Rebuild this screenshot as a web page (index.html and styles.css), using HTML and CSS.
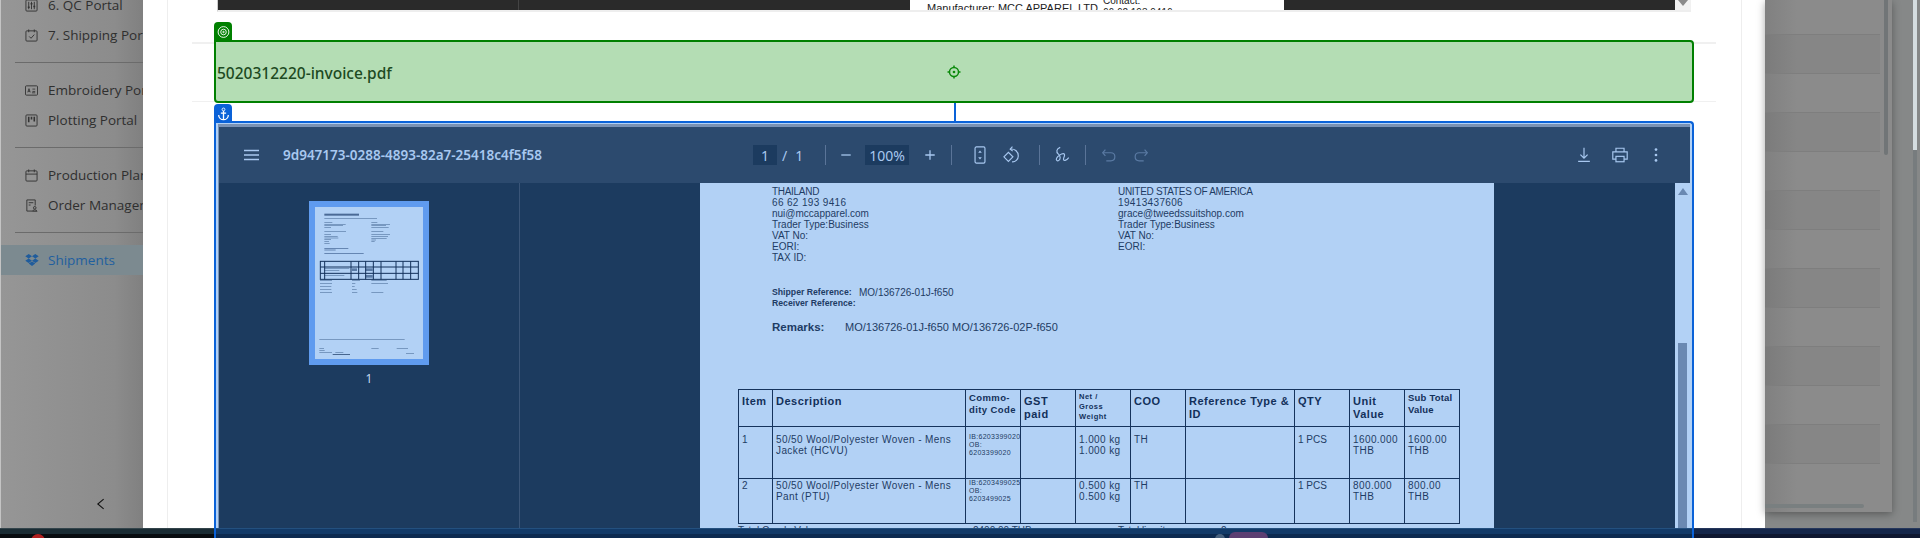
FILE: index.html
```html
<!DOCTYPE html>
<html lang="en">
<head>
    <meta charset="UTF-8">
    <title>Shipments</title>
    <link rel="stylesheet" href="styles.css">
</head>
<body>
<div class="screen">
    <!-- dimmed sidebar behind the modal -->
    <div class="sidebar">
        <div class="nav-item">
            <svg class="nav-icon" viewBox="0 0 14 14"><rect x="1" y="1" width="12" height="12" rx="1"/><path d="M4 3v8M7 3v8M10 3v8"/><path d="M3 9h2M6 5h2M9 8h2" stroke-width="1.6"/></svg>
            <span>6. QC Portal</span>
        </div>
        <div class="nav-item">
            <svg class="nav-icon" viewBox="0 0 14 14"><rect x="1" y="2" width="12" height="11" rx="1"/><path d="M4 0.5v3M10 0.5v3M4.5 8l2 2 3.5-4"/></svg>
            <span>7. Shipping Portal</span>
        </div>
        <hr class="nav-line">
        <div class="nav-item">
            <svg class="nav-icon" viewBox="0 0 14 14"><rect x="0.5" y="2" width="13" height="10" rx="1"/><path d="M3 9l1.3-4 1.3 4M3.5 8h1.7M8 5.5h3M8 8h3M7.5 9.5h3.5" stroke-width="0.9"/></svg>
            <span>Embroidery Portal</span>
        </div>
        <div class="nav-item">
            <svg class="nav-icon" viewBox="0 0 14 14"><rect x="1" y="1" width="12" height="12" rx="1"/><path d="M4 3v6M7 3v3M10 3v5" stroke-width="1.7"/></svg>
            <span>Plotting Portal</span>
        </div>
        <hr class="nav-line">
        <div class="nav-item">
            <svg class="nav-icon" viewBox="0 0 14 14"><rect x="1" y="2" width="12" height="11" rx="1"/><path d="M4 0.5v3M10 0.5v3M1 5.5h12"/></svg>
            <span>Production Planning</span>
        </div>
        <div class="nav-item">
            <svg class="nav-icon" viewBox="0 0 14 14"><path d="M8 13H2V1h9v6"/><path d="M4 4h5M4 6.5h2"/><circle cx="10.5" cy="9.5" r="1.4"/><path d="M8 13.2c.3-2 4.7-2 5 0z"/></svg>
            <span>Order Management</span>
        </div>
        <hr class="nav-line">
        <div class="nav-item nav-active">
            <svg class="nav-icon nav-icon-fill" viewBox="0 0 14 14"><path d="M3.7 1L0.3 3.3l3.4 2.2L7 3.3zM10.3 1L7 3.3l3.3 2.2 3.4-2.2zM0.3 7.7l3.4 2.2L7 7.7 3.7 5.5zM10.3 5.5L7 7.7l3.3 2.2 3.4-2.2zM3.7 10.6L7 12.9l3.3-2.3L7 8.4z"/></svg>
            <span>Shipments</span>
        </div>
        <svg class="nav-collapse" viewBox="0 0 10 14"><path d="M8.5 1.5L2 7l6.5 5.500"/></svg>
    </div>

    <div class="modal">
        <div class="modal-col">
            <!-- previous block, scrolled almost out of view -->
            <div class="pdf-strip">
                <div class="strip-dark">
                    <div class="strip-side"></div>
                    <div class="strip-doc">
                        <div class="strip-left">Manufacturer: MCC APPAREL LTD</div>
                        <div class="strip-right">Contact:<br>66 62 193 9416</div>
                    </div>
                </div>
                <div class="strip-scroll"><span class="arrow-down"></span></div>
            </div>

            <div class="field-row">
                <div class="green-block">
                    <div class="tab tab-green">
                        <svg viewBox="0 0 14 14" class="tab-icon"><circle cx="7" cy="7" r="5.800"/><circle cx="7" cy="7" r="3"/><circle cx="7" cy="7" r="0.800"/></svg>
                    </div>
                    <span class="file-name">5020312220-invoice.pdf</span>
                    <svg class="target" viewBox="0 0 14 14"><circle cx="7" cy="7" r="4.500"/><circle class="target-dot" cx="7" cy="7" r="1.300"/><path d="M7 0.500v2M7 11.500v2M0.500 7h2M11.500 7h2"/></svg>
                    <div class="connector"></div>
                </div>
            </div>

            <div class="blue-wrap">
                <div class="blue-block">
                    <div class="tab tab-blue">
                        <svg viewBox="0 0 14 16" class="tab-icon"><circle cx="7" cy="2.800" r="1.600"/><path d="M7 4.500V14.500M4 7h6M1.500 9c0 3.300 2.500 5.500 5.500 5.500s5.500-2.200 5.500-5.500" stroke-width="1.500"/></svg>
                    </div>
                    <div class="viewer">
                        <div class="toolbar">
                            <div class="tb-left">
                                <svg class="tb-icon tb-menu" viewBox="0 0 16 12"><path d="M0 1.500h15M0 6h15M0 10.500h15" stroke-width="1.300"/></svg>
                                <span class="doc-title">9d947173-0288-4893-82a7-25418c4f5f58</span>
                            </div>
                            <div class="tb-center">
                                <span class="tb-box tb-page">1</span>
                                <span class="tb-pages"><span>/</span><span>1</span></span>
                                <span class="tb-sep tb-sep-first"></span>
                                <svg class="tb-icon" viewBox="0 0 14 14"><path d="M1.500 7h11" stroke-width="1.500"/></svg>
                                <span class="tb-box tb-zoom">100%</span>
                                <svg class="tb-icon" viewBox="0 0 14 14"><path d="M1.500 7h11M7 1.500v11" stroke-width="1.500"/></svg>
                                <span class="tb-sep tb-sep-fit"></span>
                                <svg class="tb-icon tb-big" viewBox="0 0 18 20"><rect x="3.500" y="1" width="11" height="18" rx="1.500"/><path class="solid" d="M9 5l2 2.500H7zM9 15l2-2.500H7z"/></svg>
                                <svg class="tb-icon tb-big" viewBox="0 0 20 20"><path d="M1 12l5-5 5 5-5 5z"/><path d="M8 3.500c4.500-.8 9 2.500 9 7.500 0 4-3.500 7-7 6.500"/><path d="M10.500 0.800L8 3.500l2.800 2.200"/></svg>
                                <span class="tb-sep tb-sep-ink"></span>
                                <svg class="tb-icon tb-big" viewBox="0 0 20 20"><path d="M8 1.500C4 3 3 6.500 6 9c2.500 2 2.500 5.500.5 7-1.800 1.300-3.500-.5-2.500-2.500 1.200-2.300 5-5 7.500-5 2 0 1.500 2.500.5 4.500-.8 1.800-.3 3.500 1.500 3 1.500-.4 2.800-1.500 4-3"/></svg>
                                <span class="tb-sep tb-sep-tight"></span>
                                <svg class="tb-icon tb-big tb-dim" viewBox="0 0 20 20"><path d="M6 4L3 7.500 6 11"/><path d="M3.500 7.500H12c3 0 4.500 2 4.500 4.500S15 16.500 12 16.500H7"/></svg>
                                <svg class="tb-icon tb-big tb-dim" viewBox="0 0 20 20"><path d="M14 4l3 3.500-3 3.500"/><path d="M16.500 7.500H8c-3 0-4.500 2-4.500 4.500S5 16.500 8 16.500h5"/></svg>
                            </div>
                            <div class="tb-right">
                                <svg class="tb-icon tb-big" viewBox="0 0 20 20"><path d="M10 2v11M6 9.500l4 4 4-4M3.500 17h13"/></svg>
                                <svg class="tb-icon tb-big" viewBox="0 0 20 20"><path d="M5.500 6V2.500h9V6M5.500 14.500H2V6.500h16v8h-3.500"/><rect x="5.500" y="11.500" width="9" height="6"/></svg>
                                <svg class="tb-icon tb-big" viewBox="0 0 20 20"><circle class="solid" cx="10" cy="4" r="1.500"/><circle class="solid" cx="10" cy="10" r="1.500"/><circle class="solid" cx="10" cy="16" r="1.500"/></svg>
                            </div>
                        </div>
                        <div class="viewer-body">
                            <div class="thumbs">
                                <div class="thumb">
                                    <svg class="thumb-page" viewBox="75 51 324 456">
                                        <g fill="#5a7ba6">
                                            <rect x="103" y="71" width="104" height="6" fill="#4a6a96"/>
                                            <rect x="103" y="84" width="158" height="2"/>
                                            <rect x="103" y="96" width="24" height="2"/><rect x="244" y="96" width="18" height="2"/>
                                            <rect x="103" y="102" width="64" height="2"/><rect x="244" y="102" width="56" height="2"/>
                                            <rect x="103" y="106" width="56" height="2"/><rect x="244" y="106" width="44" height="2"/>
                                            <rect x="103" y="111" width="20" height="2"/><rect x="244" y="111" width="52" height="2"/>
                                            <rect x="103" y="124" width="65" height="2"/><rect x="244" y="124" width="36" height="2"/>
                                            <rect x="103" y="133" width="20" height="2"/><rect x="244" y="133" width="56" height="2"/>
                                            <rect x="103" y="138" width="40" height="2"/><rect x="244" y="139" width="50" height="2"/>
                                            <rect x="103" y="143" width="42" height="2"/><rect x="244" y="144" width="46" height="2"/>
                                            <rect x="103" y="148" width="20" height="2"/><rect x="244" y="149" width="14" height="2"/>
                                            <rect x="103" y="153" width="14" height="2"/><rect x="244" y="154" width="10" height="2"/>
                                            <rect x="103" y="159" width="16" height="2"/>
                                            <rect x="103" y="175" width="72" height="2" fill="#3f6090"/><rect x="103" y="179" width="34" height="2" fill="#3f6090"/>
                                            <rect x="103" y="189" width="118" height="2" fill="#3f6090"/>
                                            <rect x="103" y="235" width="75" height="2"/><rect x="103" y="240" width="45" height="2"/>
                                            <rect x="186" y="235" width="15" height="8"/><rect x="226" y="235" width="22" height="8"/>
                                            <rect x="103" y="255" width="60" height="2"/><rect x="226" y="255" width="22" height="8"/>
                                            <rect x="90" y="270" width="36" height="2"/><rect x="186" y="270" width="24" height="2"/><rect x="244" y="270" width="46" height="2"/>
                                            <rect x="90" y="280" width="36" height="2"/><rect x="186" y="280" width="10" height="2"/><rect x="244" y="280" width="50" height="2"/>
                                            <rect x="90" y="289" width="34" height="2"/><rect x="186" y="289" width="8" height="2"/>
                                            <rect x="90" y="298" width="34" height="2"/><rect x="186" y="298" width="14" height="2"/>
                                            <rect x="90" y="307" width="36" height="2"/><rect x="186" y="307" width="16" height="2"/><rect x="244" y="307" width="36" height="2"/>
                                            <rect x="88" y="447" width="256" height="2"/>
                                            <rect x="88" y="475" width="14" height="2"/><rect x="244" y="475" width="22" height="2"/><rect x="320" y="475" width="34" height="2"/>
                                            <rect x="88" y="481" width="16" height="2"/>
                                            <rect x="88" y="487" width="38" height="2"/><rect x="136" y="487" width="24" height="2"/><rect x="348" y="490" width="24" height="2"/>
                                        </g>
                                        <rect x="128" y="492" width="52" height="2" fill="#12305a"/>
                                        <g fill="none" stroke="#12305a" stroke-width="3">
                                            <rect x="91" y="214" width="294" height="54"/>
                                            <path d="M91 231H385M91 250H385M104 214V268M183 214V268M206 214V268M227 214V268M250 214V268M273 214V268M318 214V268M339 214V268M362 214V268"/>
                                        </g>
                                    </svg>
                                </div>
                                <div class="thumb-num">1</div>
                            </div>
                            <div class="main">
                                <div class="page">
                                    <div class="address">
                                        <div class="addr-col"><span class="caps">THAILAND</span><br><span class="num">66 62 193 9416</span><br>nui@mccapparel.com<br>Trader Type:Business<br>VAT No:<br>EORI:<br>TAX ID:</div>
                                        <div><span class="caps">UNITED STATES OF AMERICA</span><br><span class="num">19413437606</span><br>grace@tweedssuitshop.com<br>Trader Type:Business<br>VAT No:<br>EORI:</div>
                                    </div>
                                    <div class="refs">
                                        <div class="ref-line"><b>Shipper Reference:</b><span>MO/136726-01J-f650</span></div>
                                        <div class="ref-line"><b>Receiver Reference:</b></div>
                                    </div>
                                    <div class="remarks"><b>Remarks:</b><span>MO/136726-01J-f650 MO/136726-02P-f650</span></div>
                                    <table class="items">
                                        <colgroup>
                                            <col class="c-item"><col class="c-desc"><col class="c-n"><col class="c-n"><col class="c-n"><col class="c-n"><col class="c-ref"><col class="c-n"><col class="c-n"><col class="c-n">
                                        </colgroup>
                                        <tr class="head">
                                            <th>Item</th>
                                            <th>Description</th>
                                            <th class="th-small th-code">Commo-<br>dity Code</th>
                                            <th>GST<br>paid</th>
                                            <th class="th-tiny">Net /<br>Gross<br>Weight</th>
                                            <th>COO</th>
                                            <th>Reference Type &amp; ID</th>
                                            <th>QTY</th>
                                            <th>Unit<br>Value</th>
                                            <th class="th-small th-sub">Sub Total Value</th>
                                        </tr>
                                        <tr class="row-one">
                                            <td>1</td>
                                            <td>50/50 Wool/Polyester Woven - Mens Jacket (HCVU)</td>
                                            <td class="code">IB:6203399020<br>OB:<br>6203399020</td>
                                            <td></td>
                                            <td>1.000 kg<br>1.000 kg</td>
                                            <td>TH</td>
                                            <td></td>
                                            <td class="qty">1 PCS</td>
                                            <td>1600.000 THB</td>
                                            <td>1600.00 THB</td>
                                        </tr>
                                        <tr class="row-two">
                                            <td>2</td>
                                            <td>50/50 Wool/Polyester Woven - Mens Pant (PTU)</td>
                                            <td class="code">IB:6203499025<br>OB:<br>6203499025</td>
                                            <td></td>
                                            <td>0.500 kg<br>0.500 kg</td>
                                            <td>TH</td>
                                            <td></td>
                                            <td class="qty">1 PCS</td>
                                            <td>800.000 THB</td>
                                            <td>800.00 THB</td>
                                        </tr>
                                    </table>
                                    <div class="totals">
                                        <span class="t-label">Total Goods Value:</span>
                                        <span class="t-value">2400.00 THB</span>
                                        <span class="t-label2">Total line items:</span>
                                        <span>2</span>
                                    </div>
                                </div>
                            </div>
                            <div class="v-scroll">
                                <span class="arrow-up"></span>
                                <div class="v-thumb"></div>
                            </div>
                        </div>
                    </div>
                </div>
            </div>
        </div>
    </div>

    <!-- dimmed list behind the modal, right side -->
    <div class="behind">
        <div class="panel">
            <div class="panel-main">
                <div class="bands">
                    <div class="band"></div><div class="band"></div><div class="band"></div>
                    <div class="band"></div><div class="band"></div><div class="band"></div>
                </div>
                <div class="panel-hscroll"></div>
            </div>
            <div class="panel-vscroll"></div>
        </div>
        <div class="page-scroll"><div class="page-thumb"></div></div>
    </div>
</div>

<div class="taskbar">
    <div class="task-left"><span class="task-red"></span></div>
    <div class="task-blue"><span class="task-dot"></span><span class="task-pill"></span></div>
    <div class="task-right"></div>
</div>
</body>
</html>
```

FILE: styles.css
```css
* {
    box-sizing: border-box;
}

html, body {
    margin: 0;
    padding: 0;
    height: 538px;
    overflow: hidden;
    background: #888;
}

body {
    font-family: "Open Sans", sans-serif;
    display: flex;
    flex-direction: column;
}

.screen {
    display: flex;
    height: 528px;
    flex: none;
}

/* sidebar */
.sidebar {
    width: 143px;
    flex: none;
    display: flex;
    flex-direction: column;
    overflow: hidden;
    background: linear-gradient(to right, #969696, #8c8c8c 80%, #808080);
    border-left: 1px solid #c4c4c4;
}

.nav-item {
    height: 30px;
    flex: none;
    display: flex;
    align-items: center;
    white-space: nowrap;
    font-size: 13.500px;
    color: #2f2f2f;
    padding-left: 24px;
    gap: 10px;
}

.nav-item:first-child {
    margin-top: -10px;
}

.nav-icon {
    width: 13px;
    height: 13px;
    flex: none;
    fill: none;
    stroke: #333;
    stroke-width: 1;
}

.nav-icon-fill {
    fill: #1f5c9c;
    stroke: none;
    width: 14px;
    height: 14px;
    margin-right: -1px;
}

.nav-line {
    width: 100%;
    height: 1px;
    border: 0;
    background: #6b6b6b;
    margin: 12px 0 12px 14px;
    flex: none;
}

.nav-active {
    background: #7c8a90;
    color: #1f5f9f;
}

.nav-collapse {
    width: 9px;
    height: 14px;
    margin: auto 0 17px 95px;
    flex: none;
    fill: none;
    stroke: #111;
    stroke-width: 1.200;
}

/* modal */
.modal {
    width: 1622px;
    flex: none;
    background: #fff;
    padding: 0 23px 0 24px;
    height: 528px;
    overflow: hidden;
}

.modal-col {
    height: 100%;
    border-left: 1px solid #eee;
    border-right: 1px solid #eee;
    padding: 0 25px 0 24px;
    display: flex;
    flex-direction: column;
}

.pdf-strip {
    display: flex;
    height: 12px;
    flex: none;
    margin: 0 0 30px 25px;
    border-bottom: 2px solid #eee;
    border-left: 1px solid #ccc;
    width: 1474px;
}

.strip-dark {
    flex: 1;
    display: flex;
    background: #2a2a2a;
    overflow: hidden;
}

.strip-side {
    width: 301px;
    border-right: 1px solid #444;
    flex: none;
}

.strip-doc {
    width: 374px;
    margin-left: 391px;
    flex: none;
    background: #fff;
    overflow: hidden;
    display: flex;
    font-family: "Liberation Sans", sans-serif;
    color: #222;
    padding-left: 17px;
}

.strip-left {
    width: 176px;
    flex: none;
    font-size: 11px;
    line-height: 12px;
    padding-top: 2px;
    white-space: nowrap;
}

.strip-right {
    font-size: 10px;
    line-height: 12px;
    margin-top: -5px;
    white-space: nowrap;
}

.strip-scroll {
    width: 16px;
    flex: none;
    background: #f1f1f1;
    display: flex;
    justify-content: center;
}

.arrow-down {
    width: 0;
    height: 0;
    border-left: 5px solid transparent;
    border-right: 5px solid transparent;
    border-top: 6px solid #8a8a8a;
}

.field-row {
    flex: none;
    border-top: 2px solid #f0f0f0;
    border-bottom: 1px solid #f0f0f0;
    height: 60px;
    padding: 0 22px;
}

.green-block {
    position: relative;
    height: 63px;
    margin-top: -4px;
    border: 2px solid #008000;
    border-radius: 0 4px 4px 4px;
    background: #b4ddb4;
    display: flex;
    align-items: center;
    justify-content: center;
}

.file-name {
    position: absolute;
    left: 1px;
    top: 20px;
    font-family: "Noto Sans", sans-serif;
    font-size: 15.500px;
    line-height: 22px;
    font-weight: 500;
    color: #1d4a22;
}

.target {
    width: 14px;
    height: 14px;
    fill: none;
    stroke: #0b8a0b;
    stroke-width: 1.500;
}

.target-dot {
    fill: #0b8a0b;
    stroke: none;
}

.connector {
    position: absolute;
    left: 738px;
    top: 61px;
    width: 2px;
    height: 18px;
    background: #0a62d8;
}

.tab {
    position: absolute;
    left: -2px;
    width: 18px;
    height: 19px;
    border-radius: 4px 4px 0 0;
    display: flex;
    align-items: center;
    justify-content: center;
}

.tab-green {
    top: -20px;
    background: #008000;
}

.tab-blue {
    top: -19px;
    background: #0a62d8;
}

.tab-icon {
    width: 13px;
    height: 14px;
    fill: none;
    stroke: #fff;
    stroke-width: 1;
}

.blue-wrap {
    flex: 1;
    min-height: 0;
    padding: 19px 22px 0;
    display: flex;
}

.blue-block {
    position: relative;
    flex: 1;
    min-width: 0;
    display: flex;
    border: 2px solid #0a62d8;
    border-bottom: 0;
    border-radius: 0 4px 0 0;
    background: #b2d1f5;
    padding: 1px 2px 0 2px;
}

.viewer {
    flex: 1;
    min-width: 0;
    display: flex;
    flex-direction: column;
    border-top: 3px solid #7a92b4;
    border-left: 1px solid #7a92b4;
}

/* pdf toolbar */
.toolbar {
    height: 56px;
    flex: none;
    background: #2c4a6e;
    display: flex;
    align-items: center;
    color: #a8c8f0;
}

.tb-left {
    width: 534px;
    flex: none;
    display: flex;
    align-items: center;
    padding-left: 25px;
    gap: 23px;
}

.doc-title {
    font-family: "Noto Sans", sans-serif;
    font-size: 13.500px;
    font-weight: 600;
    white-space: nowrap;
}

.tb-center {
    display: flex;
    align-items: center;
    font-family: "Noto Sans", sans-serif;
    font-size: 14px;
}

.tb-box {
    height: 20px;
    background: #1c3b5f;
    display: flex;
    align-items: center;
    justify-content: center;
}

.tb-page {
    width: 24px;
}

.tb-pages {
    display: flex;
    gap: 8px;
    width: 48px;
    padding-left: 5px;
}

.tb-zoom {
    width: 44px;
    margin: 0 15px 0 13px;
    font-size: 14px;
}

.tb-sep {
    width: 1px;
    height: 20px;
    background: #5a7498;
    margin: 0 14px;
}

.tb-sep-first {
    margin-left: 0;
}

.tb-sep-fit {
    margin: 0 12px 0 15px;
}

.tb-sep-ink {
    margin: 0 6px 0 11px;
}

.tb-sep-tight {
    margin: 0 7px 0 7px;
}

.tb-icon {
    width: 12px;
    height: 12px;
    flex: none;
    fill: none;
    stroke: #a8c8f0;
    stroke-width: 1.300;
}

.tb-menu {
    width: 16px;
}

.tb-big {
    width: 18px;
    height: 18px;
    margin: 0 7px;
}

.tb-dim {
    stroke: #5b7ba4;
}

.solid {
    fill: #a8c8f0;
    stroke: none;
}

.tb-right {
    margin-left: auto;
    display: flex;
    gap: 4px;
    padding-right: 18px;
    align-items: center;
}

/* pdf body */
.viewer-body {
    flex: 1;
    min-height: 0;
    display: flex;
    background: #1c3b5f;
}

.thumbs {
    width: 301px;
    flex: none;
    border-right: 1px solid #3a5578;
    padding-top: 18px;
    display: flex;
    flex-direction: column;
    align-items: center;
}

.thumb {
    width: 120px;
    height: 164px;
    border: 6px solid #5f9bef;
    background: #b2d1f5;
    margin-left: -1px;
}

.thumb-page {
    display: block;
    width: 108px;
    height: 152px;
}

.thumb-num {
    margin-top: 5px;
    font-family: "Noto Sans", sans-serif;
    font-size: 12px;
    color: #c5d8f0;
}

.main {
    flex: 1;
    min-width: 0;
    padding-left: 180px;
    overflow: hidden;
}

.page {
    width: 794px;
    height: 100%;
    background: #b2d1f5;
    overflow: hidden;
    padding-left: 38px;
    font-family: "Liberation Sans", sans-serif;
    color: #1e3c64;
}

.address {
    display: flex;
    padding: 3px 0 0 34px;
    font-size: 10px;
    line-height: 11px;
    white-space: nowrap;
}

.addr-col {
    width: 346px;
    flex: none;
}

.caps {
    letter-spacing: -0.300px;
}

.num {
    letter-spacing: 0.350px;
}

.refs {
    margin-top: 24px;
    padding-left: 34px;
    font-size: 8.700px;
    line-height: 11px;
    white-space: nowrap;
}

.ref-line {
    display: flex;
    align-items: center;
}

.ref-line b {
    width: 87px;
    flex: none;
}

.ref-line span {
    font-size: 10px;
}

.remarks {
    margin-top: 12px;
    padding-left: 34px;
    display: flex;
    font-size: 11px;
    line-height: 13px;
    white-space: nowrap;
}

.remarks b {
    width: 73px;
    flex: none;
    font-size: 11.500px;
}

.items {
    margin-top: 55px;
    width: 721px;
    table-layout: fixed;
    border-collapse: collapse;
    color: #1e3c64;
}

.c-item { width: 34px; }
.c-desc { width: 193px; }
.c-n { width: 55px; }
.c-ref { width: 109px; }

.items th, .items td {
    border: 1px solid #15335c;
    vertical-align: top;
    text-align: left;
    padding: 1px 3px;
}

.items th {
    font-size: 11px;
    line-height: 13px;
    font-weight: 700;
    letter-spacing: 0.500px;
    color: #12305a;
    padding-top: 5px;
}

.items th.th-small {
    font-size: 9.500px;
    line-height: 12px;
    padding-top: 2px;
}

.items th.th-code {
    letter-spacing: 0.400px;
    white-space: nowrap;
}

.items th.th-sub {
    letter-spacing: 0.200px;
}

.items th.th-tiny {
    font-size: 7.500px;
    line-height: 10px;
    padding-top: 2px;
}

.head {
    height: 37px;
}

.row-one {
    height: 52px;
}

.row-two {
    height: 45px;
}

.items td {
    font-size: 10px;
    line-height: 11px;
    letter-spacing: 0.400px;
}

.row-one td {
    padding-top: 7px;
}

.items td.code {
    font-size: 7px;
    line-height: 8px;
    letter-spacing: 0.300px;
    padding-top: 0;
    white-space: nowrap;
}

.row-one td.code {
    padding-top: 6px;
}

.items td.qty {
    letter-spacing: 0;
}

.totals {
    display: flex;
    font-size: 10px;
    line-height: 11px;
    margin-top: 1px;
}

.t-label {
    width: 235px;
    flex: none;
}

.t-value {
    width: 145px;
    flex: none;
}

.t-label2 {
    width: 103px;
    flex: none;
}

.v-scroll {
    width: 15px;
    flex: none;
    background: #b2d1f5;
    display: flex;
    flex-direction: column;
    align-items: center;
    padding-top: 5px;
}

.arrow-up {
    width: 0;
    height: 0;
    flex: none;
    border-left: 5px solid transparent;
    border-right: 5px solid transparent;
    border-bottom: 7px solid #6a89b2;
}

.v-thumb {
    width: 9px;
    flex: 1;
    margin-top: 148px;
    background: #6a89b2;
}

/* right side, behind the modal */
.behind {
    flex: 1;
    min-width: 0;
    display: flex;
    background: #868888;
}

.panel {
    width: 127px;
    height: 512px;
    flex: none;
    display: flex;
    background: linear-gradient(to right, #808080, #8b8b8b 25%);
    box-shadow: 0 2px 8px rgba(0, 0, 0, 0.35);
}

.panel-main {
    width: 115px;
    flex: none;
    padding-top: 34px;
}

.bands {
    display: flex;
    flex-direction: column;
    gap: 38px;
}

.band {
    height: 40px;
    background: rgba(0, 0, 0, 0.035);
    border-top: 1px solid #7e7e7e;
    border-bottom: 1px solid #7e7e7e;
}

.panel-hscroll {
    width: 99px;
    height: 4px;
    margin-top: 40px;
    background: #797f80;
    border-radius: 0 2px 2px 0;
}

.panel-vscroll {
    width: 4px;
    height: 155px;
    margin-left: 4px;
    background: #717577;
    border-radius: 0 0 2px 2px;
}

.page-scroll {
    width: 4px;
    height: 522px;
    margin-left: 21px;
    background: #777c7e;
    flex: none;
}

.page-thumb {
    height: 150px;
    background: #d5dde0;
}

/* taskbar */
.taskbar {
    height: 10px;
    flex: none;
    display: flex;
}

.task-left {
    width: 214px;
    flex: none;
    overflow: hidden;
    padding: 6px 0 0 31px;
    background: linear-gradient(to bottom, #33444b 0, #33444b 1px, #1a2c34 1px, #1a2c34 6px, #080c10 6px);
}

.task-red {
    display: block;
    width: 14px;
    height: 14px;
    border-radius: 50%;
    background: #b02020;
}

.task-blue {
    width: 1480px;
    flex: none;
    overflow: hidden;
    display: flex;
    gap: 4px;
    padding: 4px 0 0 999px;
    border-left: 2px solid #0a62d8;
    border-right: 2px solid #0a62d8;
    background: linear-gradient(to bottom, #23507f 0, #23507f 1px, #123a68 1px, #123a68 6px, #0c2a50 6px);
}

.task-dot {
    width: 10px;
    height: 10px;
    border-radius: 50%;
    background: #48627f;
    margin-top: 2px;
    flex: none;
}

.task-pill {
    width: 39px;
    height: 12px;
    border-radius: 6px 6px 0 0;
    background: #5c3f72;
    flex: none;
}

.task-right {
    flex: 1;
    background: linear-gradient(to bottom, #25375c 0, #25375c 1px, #14264a 1px, #14264a 6px, #0e1730 6px);
}
```
